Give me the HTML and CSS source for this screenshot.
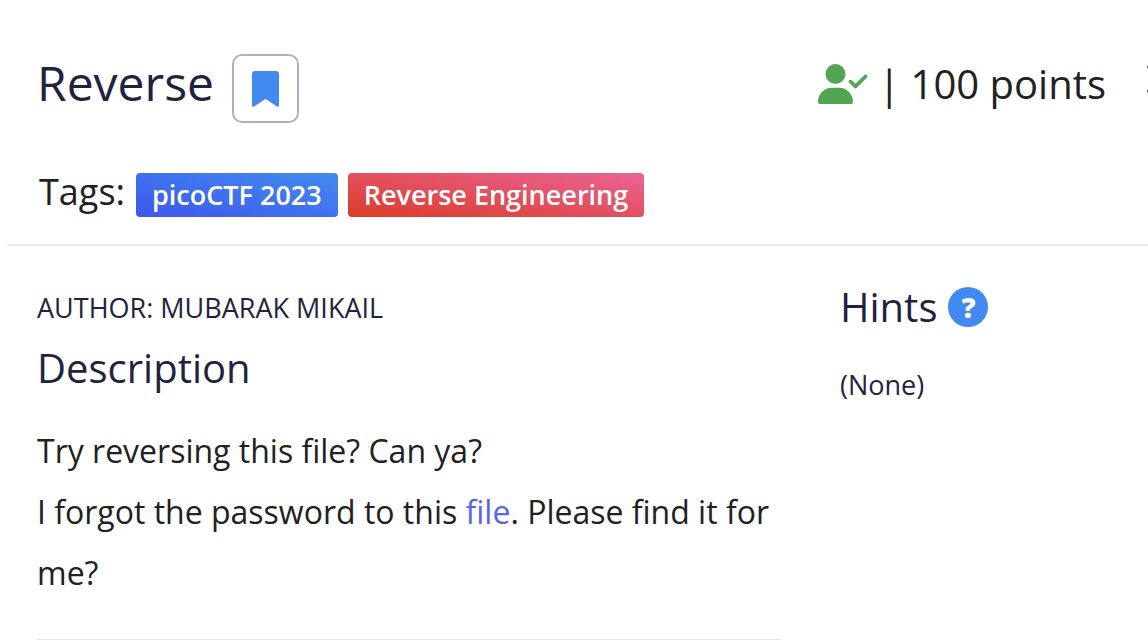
FILE: index.html
```html
<!DOCTYPE html>
<html lang="en">
<head>
<meta charset="utf-8">
<title>Reverse</title>
<link rel="stylesheet" href="styles.css">
</head>
<body>
<main class="challenge">
  <header class="header">
    <div class="title-row">
      <h1 class="title">Reverse</h1>
      <button class="bookmark" type="button" aria-label="Bookmark">
        <svg class="bookmark-icon" viewBox="0 0 27 36" aria-hidden="true"><path d="M0 34.500V3Q0 0 3 0H24Q27 0 27 3V34.500Q27 36.500 25 35.500L13.500 28L2 35.500Q0 36.500 0 34.500Z"/></svg>
      </button>
      <div class="score">
        <svg class="solved-icon" viewBox="0 0 640 512" aria-hidden="true"><path d="M96 128a128 128 0 1 1 256 0A128 128 0 1 1 96 128zM0 482.300C0 383.800 79.800 304 178.300 304h91.400C368.200 304 448 383.800 448 482.300c0 16.400-13.300 29.700-29.700 29.700H29.700C13.300 512 0 498.700 0 482.300zM625 177L497 305c-9.400 9.400-24.600 9.400-33.900 0l-64-64c-9.400-9.400-9.400-24.600 0-33.900s24.600-9.400 33.900 0l47 47L591 143c9.400-9.400 24.600-9.400 33.900 0s9.400 24.600 0 33.900z"/></svg>
        <span class="points">| 100 points</span>
      </div>
      <button class="close" type="button" aria-label="Close">
        <svg class="close-icon" viewBox="0 0 28 28" aria-hidden="true"><path d="M2 2L26 26M26 2L2 26"/></svg>
      </button>
    </div>
    <div class="tags">
      <span class="tags-label">Tags:</span>
      <span class="tag tag-event">picoCTF 2023</span>
      <span class="tag tag-category">Reverse Engineering</span>
    </div>
  </header>
  <div class="content">
    <section class="details">
      <p class="author">AUTHOR: MUBARAK MIKAIL</p>
      <h2 class="heading">Description</h2>
      <div class="description">
        <p>Try reversing this file? Can ya?</p>
        <p>I forgot the password to this <a class="link" href="#file">file</a>. Please find it for me?</p>
      </div>
    </section>
    <section class="hints">
      <h2 class="heading hints-heading">Hints <button class="help" type="button" aria-label="About hints">?</button></h2>
      <p class="none">(None)</p>
    </section>
  </div>
</main>
</body>
</html>
```
FILE: styles.css
```css
* { box-sizing: border-box; }
body { margin: 0; overflow: hidden; background: #fff; color: #212121; font-family: "Open Sans", sans-serif; }
h1, h2, p { margin: 0; font-weight: 400; }
button { font-family: inherit; padding: 0; }
.challenge { padding-left: 7px; }
.header { padding: 54px 0 27px 30px; border-bottom: 2px solid #e9e9ee; }
.title-row { display: flex; align-items: center; height: 69px; }
.title { color: #1f2340; font-size: 48px; line-height: 60px; margin-bottom: 12px; }
.bookmark { display: grid; place-items: center; width: 67px; height: 69px; margin-left: 18px; background: #fff; border: 2px solid #adb2bb; border-radius: 10px; }
.bookmark-icon { width: 27px; height: 36px; fill: #428af0; }
.score { display: flex; align-items: center; gap: 10px; margin-left: auto; margin-bottom: 10px; }
.solved-icon { width: 50px; height: 40px; fill: #52a552; }
.points { font-size: 40px; line-height: 56px; white-space: nowrap; }
/* The close button runs past the right edge of the panel */
.close { flex: none; width: 28px; height: 28px; margin: 0 -27px 20px 41px; border: 0; background: transparent; }
.close-icon { display: block; width: 28px; height: 28px; fill: none; stroke: #5b5780; stroke-width: 4; stroke-linecap: round; }
.tags { display: flex; align-items: center; gap: 10px; margin-top: 50px; padding-left: 2px; height: 44px; }
.tags-label { font-size: 36px; line-height: 44px; margin: 0 1px 6px 0; }
.tag { height: 44px; padding: 0 16px; border-radius: 4px; color: #fff; font-size: 27px; font-weight: 600; line-height: 44px; white-space: nowrap; }
.tag-event { background: linear-gradient(to top right, #3d57ec, #428cf0); }
.tag-category { background: linear-gradient(to top right, #db3b28, #ea6595); }
.content { display: grid; grid-template-columns: 743fr 308fr; gap: 60px; padding-left: 30px; }
.details { padding-top: 44px; border-bottom: 2px solid #e6e6e6; }
.author { color: #1f2340; font-size: 27px; line-height: 36px; }
.heading { color: #1f2340; font-size: 40px; line-height: 56px; }
.details .heading { margin-top: 14px; }
.description { margin-top: 24px; padding-bottom: 36px; font-size: 32px; line-height: 61px; }
.link { color: #5867e8; text-decoration: none; }
.hints { padding-top: 33px; color: #1f2340; }
.hints-heading { display: flex; align-items: center; gap: 11px; }
.help { width: 40px; height: 40px; border: 0; border-radius: 50%; background: #428af0; color: #fff; font-size: 28px; font-weight: 800; line-height: 40px; }
.none { margin-top: 32px; font-size: 27px; line-height: 36px; }
```
